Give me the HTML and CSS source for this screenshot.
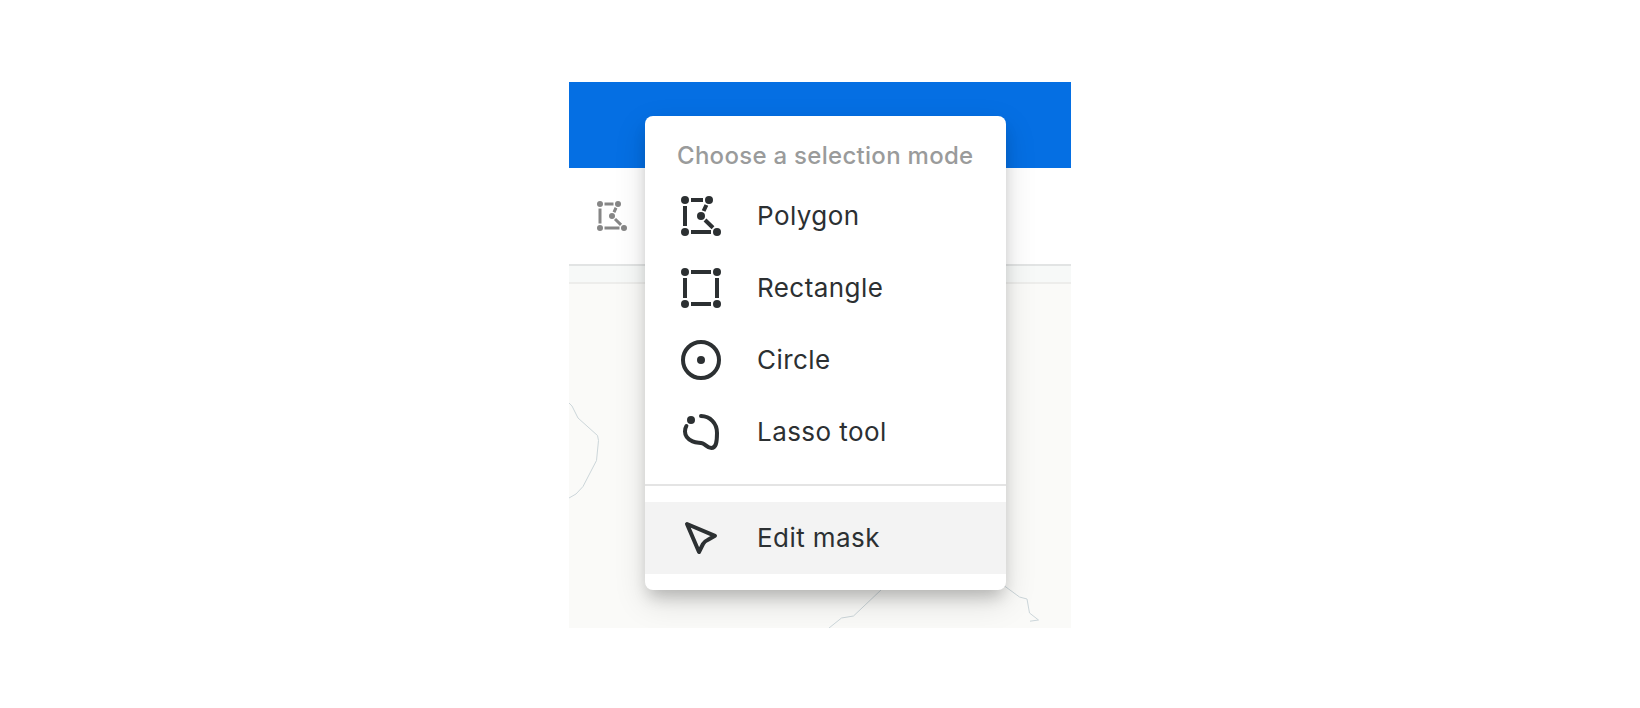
FILE: index.html
```html
<!DOCTYPE html>
<html lang="en">
<head>
<meta charset="utf-8">
<title>Selection mode</title>
<link rel="stylesheet" href="styles.css">
</head>
<body>
<svg class="symbols" aria-hidden="true">
  <symbol id="polygon" viewBox="0 0 24 24">
    <path fill="none" stroke="currentColor" stroke-width="2" d="M7 4h6M4 7v10M7 20h10M14.7 6.500l-1.400 3M14 14l4 3.900"/>
    <g fill="currentColor"><circle cx="4" cy="4" r="2"/><circle cx="16" cy="4" r="2"/><circle cx="12" cy="12" r="2"/><circle cx="4" cy="20" r="2"/><circle cx="20" cy="20" r="2"/></g>
  </symbol>
</svg>
<main class="frame">
  <header class="topbar"></header>
  <div class="toolbar"><svg class="tool-icon"><use href="#polygon"/></svg></div>
  <div class="ruler"></div>
  <div class="map">
    <svg class="coast" viewBox="0 284 502 344" fill="none">
      <path d="M0 403l3 3 6 12 19.500 17.500 1 5-2 20L14 486.500 7 494l-7 4M260 628l12.500-10 12-2L313 589M435.500 586l15 11 7.500 2 2.500 14 9 7-8.500 1.200"/>
    </svg>
  </div>
  <nav class="menu">
    <h1 class="menu-title">Choose a selection mode</h1>
    <ul class="menu-list">
      <li class="item"><svg class="icon"><use href="#polygon"/></svg><span class="label">Polygon</span></li>
      <li class="item"><svg class="icon" viewBox="0 0 24 24"><path class="line" d="M7 4h10M7 20h10M4 7v10M20 7v10"/><g fill="currentColor"><circle cx="4" cy="4" r="2"/><circle cx="20" cy="4" r="2"/><circle cx="4" cy="20" r="2"/><circle cx="20" cy="20" r="2"/></g></svg><span class="label">Rectangle</span></li>
      <li class="item"><svg class="icon" viewBox="0 0 24 24"><circle class="line" cx="12" cy="12" r="9"/><circle cx="12" cy="12" r="2" fill="currentColor"/></svg><span class="label">Circle</span></li>
      <li class="item"><svg class="icon" viewBox="0 0 24 24"><path class="line round" d="M12 4C16.500 4.100 20 7.500 20 12.500C20 18 19.300 20 17.200 20C15.200 20 14.500 18.300 12.800 17.700C11.300 17.200 9.800 17.600 7.800 16.700C5.400 15.600 4 13.700 4 11.700Q4 10.100 4.700 9"/><circle cx="7" cy="6" r="2" fill="currentColor"/></svg><span class="label">Lasso tool</span></li>
    </ul>
    <ul class="menu-list menu-list-edit">
      <li class="item item-active"><svg class="icon" viewBox="0 0 24 24"><path class="line round" d="M5 5L19 10.900L15.300 13Q13.700 13.700 13 15L11 19Z"/></svg><span class="label">Edit mask</span></li>
    </ul>
  </nav>
</main>
</body>
</html>
```
FILE: styles.css
```css
* { box-sizing: border-box; }
body {
  margin: 0;
  padding-top: 82px;
  background: #fff;
  color: #2c3032;
  font-family: Inter, "Liberation Sans", sans-serif;
}
.symbols { position: absolute; width: 0; height: 0; }
.frame {
  position: relative;
  display: flex;
  flex-direction: column;
  width: 502px;
  height: 546px;
  margin: 0 auto;
  overflow: hidden;
}
.topbar { height: 86px; background: #056fe3; }
.toolbar {
  display: flex;
  align-items: center;
  height: 98px;
  padding: 0 25px;
  border-bottom: 2px solid #e2e4e4;
}
.tool-icon { width: 36px; height: 36px; color: #868686; }
.ruler { height: 18px; background: #f7f9f8; border-bottom: 2px solid #ededeb; }
.map { flex: 1; background: #fafaf8; }
.coast { display: block; width: 100%; height: 100%; stroke: #ccd6da; stroke-width: 1; }
.menu {
  position: absolute;
  top: 34px;
  left: 76px;
  width: 361px;
  height: 474px;
  background: #fff;
  border-radius: 8px;
  box-shadow: 0 10px 16px -4px rgba(0, 0, 0, .2), 0 12px 32px rgba(0, 0, 0, .13);
}
.menu-title {
  height: 64px;
  margin: 0;
  padding: 16px 0 0 32px;
  color: #9a9b9b;
  font-size: 24px;
  font-weight: 500;
  line-height: 48px;
  letter-spacing: .29px;
  white-space: nowrap;
}
.menu-list { margin: 0; padding: 0 0 16px; list-style: none; }
.menu-list-edit { padding: 16px 0; border-top: 2px solid #e4e4e4; }
.item {
  display: flex;
  align-items: center;
  gap: 32px;
  height: 72px;
  padding: 0 32px;
  font-size: 26px;
  letter-spacing: .43px;
}
.label { padding-bottom: 2px; }
.item-active { background: #f3f3f3; }
.icon { width: 48px; height: 48px; flex: none; }
.line { fill: none; stroke: currentColor; stroke-width: 2; }
.round { stroke-linecap: round; stroke-linejoin: round; }
```
